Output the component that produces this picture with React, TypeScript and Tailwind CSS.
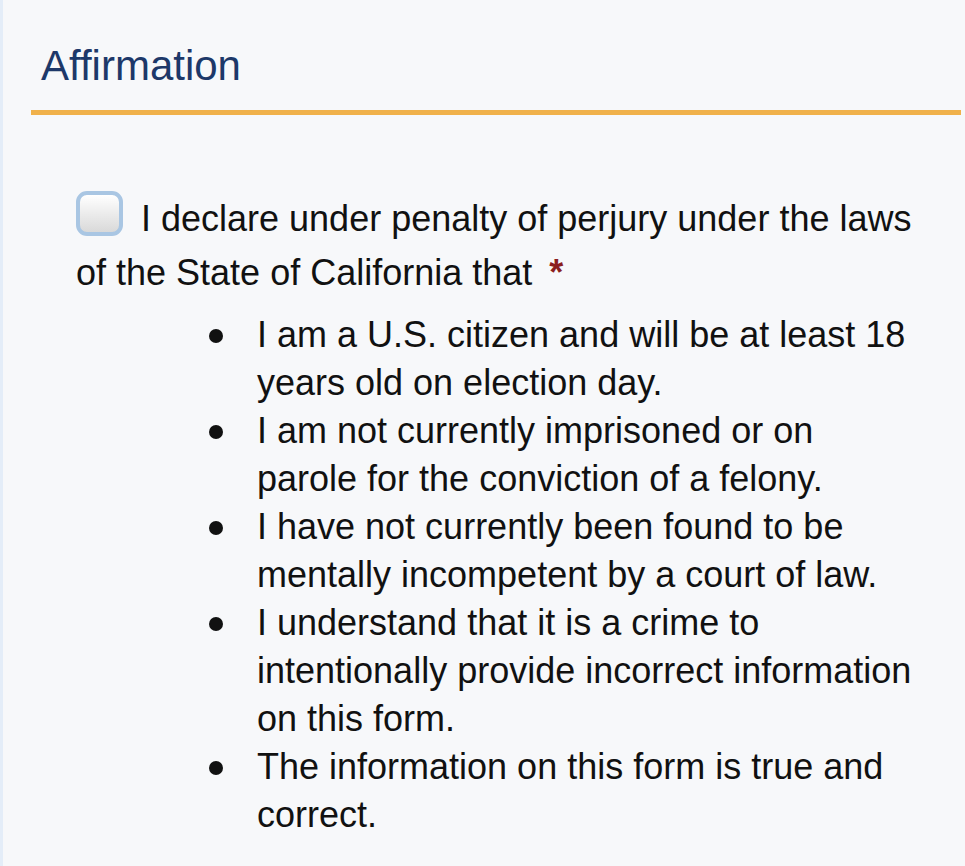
import React from "react";

const items = [
  "I am a U.S. citizen and will be at least 18 years old on election day.",
  "I am not currently imprisoned or on parole for the conviction of a felony.",
  "I have not currently been found to be mentally incompetent by a court of law.",
  "I understand that it is a crime to intentionally provide incorrect information on this form.",
  "The information on this form is true and correct.",
];

const App = () => {
  return (
    <div
      className="min-h-screen bg-[#f7f8fa] border-l-[3px] border-[#e4edf8] text-[#111111]"
      style={{ fontFamily: '"Liberation Sans", Arial, Helvetica, sans-serif' }}
    >
      <h2 className="pl-[38px] pt-[42px] text-[42px] leading-[48px] font-normal text-[#1d3869]">
        Affirmation
      </h2>
      <div className="mt-[20px] ml-[28px] mr-[4px] h-[5px] bg-[#f0b14b]" />

      <div className="pl-[73px] pr-[28px] pt-[76px]">
        <label className="block text-[36px] leading-[54px]">
          <span className="inline-block w-[47px] h-[45px] align-[-5px] mr-[18px] rounded-[11px] border-[4px] border-[#a9c6e3] bg-gradient-to-b from-white to-[#d9d9d9]" />
          I declare under penalty of perjury under the laws of the State of
          California that{" "}
          <span className="ml-[7px] font-bold text-[#8b1e1e]">*</span>
        </label>

        <ul className="mt-[11px] pl-[128px]">
          {items.map((item) => (
            <li key={item} className="flex items-start text-[36px] leading-[48px]">
              <span className="shrink-0 w-[53px]">
                <span className="block mt-[18px] ml-[5px] w-[14px] h-[14px] rounded-full bg-[#111111]" />
              </span>
              <span className="w-[655px]">{item}</span>
            </li>
          ))}
        </ul>
      </div>
    </div>
  );
};

export default App;
